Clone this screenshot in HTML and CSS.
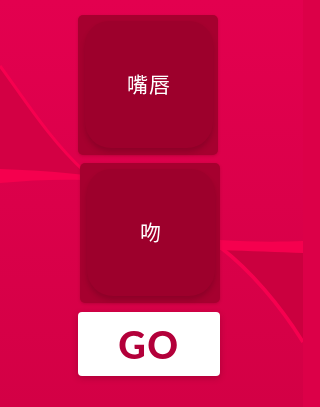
FILE: index.html
```html
<!DOCTYPE html>
<html lang="zh">
<head>
<meta charset="utf-8">
<link rel="stylesheet" href="styles.css">
</head>
<body>
<svg class="backdrop" viewBox="0 0 303 407" aria-hidden="true">
  <defs>
    <linearGradient id="bg" x1="0" y1="0" x2="0" y2="1">
      <stop offset="0" stop-color="#e3004f"/>
      <stop offset="1" stop-color="#d30045"/>
    </linearGradient>
  </defs>
  <rect width="303" height="407" fill="url(#bg)"/>
  <path d="M0,66 C25,100 50,140 85,172 L85,176 C55,174 25,172 0,171 Z" fill="#d30044"/>
  <path d="M0,66 C25,100 50,140 85,172" fill="none" stroke="#f6004f" stroke-width="3"/>
  <path d="M0,169 C30,170 60,172 85,175 L85,180 C60,179 30,180 0,183 Z" fill="#f5004e"/>
  <path d="M220,247 C250,270 280,305 303,340 L303,252 C280,250 250,249 220,247 Z" fill="#cb003f"/>
  <path d="M220,247 C250,270 280,305 303,342" fill="none" stroke="#f6004f" stroke-width="3.5"/>
  <path d="M220,240 C250,242 280,242 303,241 L303,253 C280,252 250,251 220,250 Z" fill="#f5004e"/>
</svg>
<main class="stack">
  <div class="key">
    <div class="key-face">嘴唇</div>
  </div>
  <div class="key key-shift">
    <div class="key-face">吻</div>
  </div>
  <button class="go">GO</button>
</main>
</body>
</html>
```

FILE: styles.css
```css
html, body {
  margin: 0;
  padding: 0;
  width: 100%;
  height: 100%;
  overflow: hidden;
  background: #dc0048;
}

.backdrop {
  position: fixed;
  left: 0;
  top: 0;
  width: 303px;
  height: 407px;
  z-index: 0;
}

.stack {
  position: relative;
  z-index: 1;
  display: flex;
  flex-direction: column;
  align-items: flex-start;
  gap: 8px;
  padding: 15px 0 0 78px;
}

.key {
  width: 140px;
  height: 140px;
  box-sizing: border-box;
  background: #a6002f;
  border-radius: 5px;
  padding: 6px 5px 7px 7px;
  display: flex;
  box-shadow: 0 1px 3px rgba(90, 0, 25, 0.25);
}

.key-shift {
  margin-left: 2px;
}

.key-face {
  flex: 1;
  border-radius: 24px 24px 26px 26px;
  background: #9d002c;
  box-shadow: 0 4px 5px rgba(70, 0, 20, 0.25);
  display: flex;
  align-items: center;
  justify-content: center;
  padding-bottom: 3px;
  color: #ffffff;
  font-family: "Noto Sans CJK SC", "Noto Sans", sans-serif;
  font-size: 21px;
  font-weight: 400;
  letter-spacing: 1px;
}

.go {
  margin-top: 1px;
  width: 142px;
  height: 64px;
  border: none;
  border-radius: 4px;
  background: #ffffff;
  box-shadow: 0 2px 6px rgba(80, 0, 25, 0.3);
  color: #b3003a;
  font-family: "Lato", "Open Sans", sans-serif;
  font-weight: 900;
  font-size: 38px;
  letter-spacing: 1.5px;
  line-height: 1;
  padding: 0;
  display: flex;
  align-items: center;
  justify-content: center;
}
```
